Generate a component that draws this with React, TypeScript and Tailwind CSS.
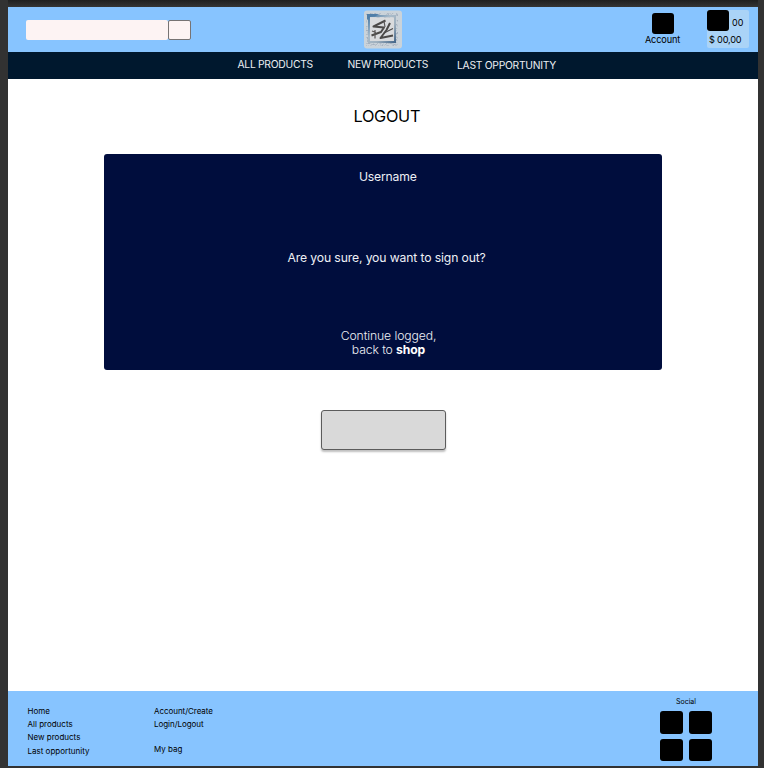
const navItems = [
  { label: 'ALL PRODUCTS', place: 'ml-[229.5px] w-[110px] pt-[4px]' },
  { label: 'NEW PRODUCTS', place: 'w-[109.5px] pt-[4px]' },
  { label: 'LAST OPPORTUNITY', place: 'pt-[5px]' },
];

function Logo() {
  return (
    <svg className="ml-[173px] mt-[3px] h-[39px] w-[38px]" viewBox="0 0 38 39">
      <defs>
        <filter id="grain" x="0" y="0" width="1" height="1">
          <feTurbulence type="fractalNoise" baseFrequency="0.55" numOctaves="2" seed="8" result="n" />
          <feColorMatrix in="n" type="matrix" values="0 0 0 0 0.38  0 0 0 0 0.44  0 0 0 0 0.52  5 0 0 0 -2.4" result="c" />
          <feComposite in="c" in2="SourceGraphic" operator="in" />
        </filter>
        <linearGradient id="edge" x1="0" y1="0" x2="1" y2="1">
          <stop offset="0" stopColor="#4a7ba6" />
          <stop offset="0.4" stopColor="#a9bccb" />
          <stop offset="0.65" stopColor="#9fb0be" />
          <stop offset="1" stopColor="#47698b" />
        </linearGradient>
      </defs>
      <rect y="0.5" width="38" height="38" rx="3" fill="#cad3da" />
      <rect x="2" y="3" width="32" height="33" fill="#9cabb7" filter="url(#grain)" />
      <rect x="5" y="6" width="26" height="26" fill="none" stroke="url(#edge)" strokeWidth="2" />
      <path d="M3 4H15L11 6.5H6L3 10Z" fill="#4f7ea8" />
      <rect x="6" y="7.5" width="24" height="23.5" fill="#d9dbdd" />
      <g fill="none" stroke="#4c4a48" strokeWidth="2" strokeLinejoin="round">
        <path d="M21.5 10.5L9.5 16.5L20 17.5L17 22L7.5 25.5" />
        <path d="M26 13L22.5 20L16.5 28L29 25.5" />
        <path d="M20 23L29 18.5" strokeWidth="1.2" />
      </g>
      <path d="M11 20V28.5M8 21L12 22.5M20 11L21 17" stroke="#5b5857" strokeWidth="1.2" fill="none" />
    </svg>
  );
}

function Header() {
  return (
    <header className="flex h-[45px] items-start bg-[#87c4ff]">
      <div className="ml-[18px] mt-[13px] h-5 w-[142px] rounded-[2px] bg-[#fdf3f3]" />
      <div className="mt-[13px] h-[20px] w-[23px] rounded-[2px] border border-[#777373] bg-[#fdf3f3]" />
      <Logo />
      <div className="ml-[243px] mt-[6px] flex w-[35px] flex-col items-center">
        <div className="ml-[1px] h-[21px] w-[22px] rounded-[3px] bg-black" />
        <span className="whitespace-nowrap text-[9.2px] leading-[12px] tracking-[-0.15px]">Account</span>
      </div>
      <div className="ml-[27px] mt-[3px] h-[38px] w-[42px] rounded-[2px] bg-[#aad3f7]">
        <div className="flex h-[21px] items-center">
          <div className="h-[21px] w-[22px] shrink-0 rounded-[3px] bg-black" />
          <span className="ml-[3px] mt-[4px] text-[9px] leading-[12px]">00</span>
        </div>
        <span className="ml-[2px] mt-[3px] block whitespace-nowrap text-[9.2px] leading-[12px] tracking-[-0.2px]">$ 00,00</span>
      </div>
    </header>
  );
}

function Footer() {
  return (
    <footer className="flex h-[75px] items-start bg-[#87c4ff] text-[8px] leading-[13.4px]">
      <div className="ml-[19.5px] mt-[13.5px] flex w-[126.5px] flex-col">
        <span>Home</span>
        <span>All products</span>
        <span>New products</span>
        <span>Last opportunity</span>
      </div>
      <div className="mt-[13.5px] flex w-[505px] flex-col">
        <span className="tracking-[-0.05px]">Account/Create</span>
        <span className="tracking-[-0.05px]">Login/Logout</span>
        <span className="mt-[11.5px]">My bag</span>
      </div>
      <div className="mt-[5px] flex w-[54px] flex-col items-center">
        <span className="text-[7px] leading-[11px]">Social</span>
        <div className="mt-[4px] grid grid-cols-2 gap-x-[6px] gap-y-[5px]">
          {[0, 1, 2, 3].map((i) => (
            <div key={i} className="h-[22.5px] w-[23px] rounded-[3px] bg-black" />
          ))}
        </div>
      </div>
    </footer>
  );
}

export default function App() {
  return (
    <div className="h-[768px] w-[764px] overflow-hidden bg-[#323232] pl-2 pr-[6px] font-['Inter',sans-serif] text-black">
      <div className="h-[7px] bg-linear-to-b from-[#202020] to-[#353535]" />
      <div className="flex h-[759px] flex-col bg-white">
        <Header />
        <nav className="flex h-[27px] shrink-0 bg-[#00182e] text-[10.3px] leading-[16px] tracking-[-0.27px] text-[#eceff2]">
          {navItems.map((item) => (
            <a key={item.label} className={`block whitespace-nowrap ${item.place}`}>
              {item.label}
            </a>
          ))}
        </nav>
        <main className="flex flex-1 flex-col">
          <h1 className="ml-[345.5px] mt-[28px] text-[16.3px] font-normal leading-[19px] tracking-[-0.3px]">LOGOUT</h1>
          <section className="ml-[96px] mt-[28px] flex h-[216px] w-[558px] flex-col rounded-[3px] bg-[#000d3d] text-[12.2px] leading-[15px] text-[#eef0f5]">
            <p className="ml-[255px] mt-[15px] tracking-[-0.2px]">Username</p>
            <p className="ml-[183.5px] mt-[66px] tracking-[-0.13px]">Are you sure, you want to sign out?</p>
            <p className="ml-[226px] mt-[64px] w-[117px] text-center font-light leading-[14px] tracking-[-0.1px]">
              Continue logged,
              <br />
              back to <b className="font-bold text-white">shop</b>
            </p>
          </section>
          <button className="ml-[313px] mt-[40px] h-[40px] w-[125px] rounded-[3px] border border-[#5c5c5c] bg-[#d9d9d9] shadow-[0_2px_2px_rgba(0,0,0,0.25)]" />
        </main>
        <Footer />
      </div>
    </div>
  );
}
